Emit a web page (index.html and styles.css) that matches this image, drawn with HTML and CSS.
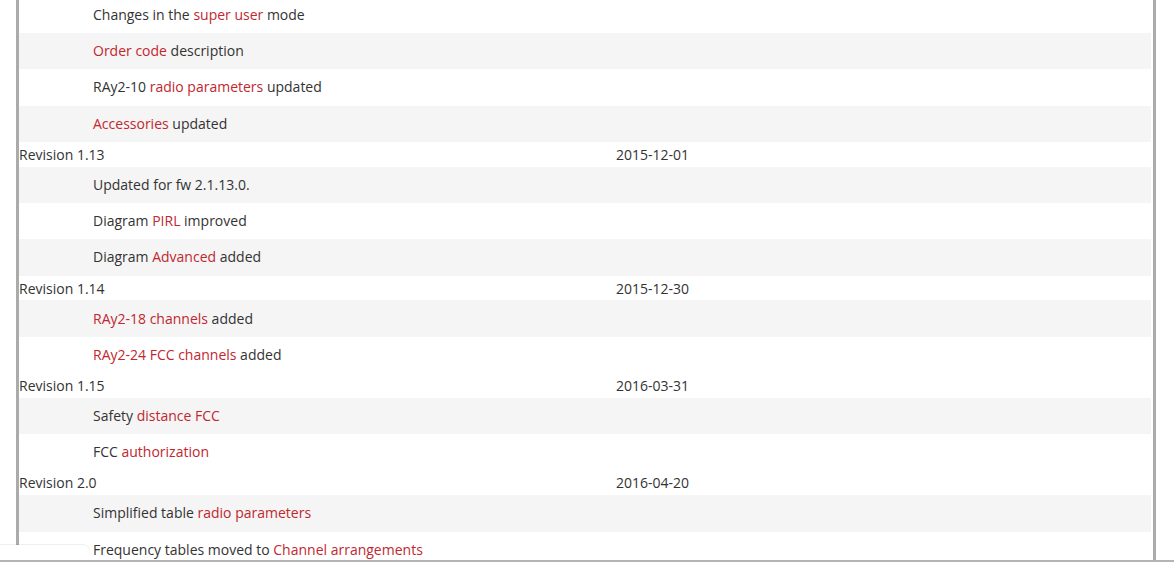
FILE: index.html
```html
<!DOCTYPE html>
<html lang="en">
<head>
<meta charset="utf-8">
<title>Revision history</title>
<link rel="stylesheet" href="styles.css">
</head>
<body>
<div class="frame">
  <div class="history">
    <div class="row item"><span></span><span>Changes in the <a class="ref">super user</a> mode</span><span></span></div>
    <div class="row item alt"><span></span><span><a class="ref">Order code</a> description</span><span></span></div>
    <div class="row item"><span></span><span>RAy2-10 <a class="ref">radio parameters</a> updated</span><span></span></div>
    <div class="row item alt"><span></span><span><a class="ref">Accessories</a> updated</span><span></span></div>

    <div class="row rev"><span class="rev-name">Revision 1.13</span><span class="rev-date">2015-12-01</span></div>
    <div class="row item alt"><span></span><span>Updated for fw 2.1.13.0.</span><span></span></div>
    <div class="row item"><span></span><span>Diagram <a class="ref">PIRL</a> improved</span><span></span></div>
    <div class="row item alt"><span></span><span>Diagram <a class="ref">Advanced</a> added</span><span></span></div>

    <div class="row rev"><span class="rev-name">Revision 1.14</span><span class="rev-date">2015-12-30</span></div>
    <div class="row item alt"><span></span><span><a class="ref">RAy2-18 channels</a> added</span><span></span></div>
    <div class="row item"><span></span><span><a class="ref">RAy2-24 FCC channels</a> added</span><span></span></div>

    <div class="row rev"><span class="rev-name">Revision 1.15</span><span class="rev-date">2016-03-31</span></div>
    <div class="row item alt"><span></span><span>Safety <a class="ref">distance FCC</a></span><span></span></div>
    <div class="row item"><span></span><span>FCC <a class="ref">authorization</a></span><span></span></div>

    <div class="row rev"><span class="rev-name">Revision 2.0</span><span class="rev-date">2016-04-20</span></div>
    <div class="row item alt"><span></span><span>Simplified table <a class="ref">radio parameters</a></span><span></span></div>
    <div class="row item"><span></span><span>Frequency tables moved to <a class="ref">Channel arrangements</a></span><span></span></div>
  </div>
</div>
<div class="bottom-bar"><div class="bottom-tab"></div></div>
</body>
</html>
```

FILE: styles.css
```css
html, body {
  margin: 0;
  padding: 0;
  background: #ffffff;
  height: 100%;
  overflow: hidden;
}

body {
  font-family: "Open Sans", "Liberation Sans", sans-serif;
  font-size: 14px;
  color: #333333;
}

.frame {
  margin-left: 16px;
  width: 1132px;
  height: 562px;
  border-left: 3px solid #ababab;
  border-right: 3px solid #ababab;
  padding-right: 2px;
  overflow: hidden;
}

.history {
  margin-top: -3.4px;
}

.row {
  display: grid;
  grid-template-columns: 74px 523px 1fr;
  align-items: center;
  background: #ffffff;
  box-sizing: border-box;
}

.item {
  height: 36.33px;
  padding-bottom: 1px;
}

.item.alt {
  background: #f5f5f5;
}

.rev {
  height: 24.75px;
  grid-template-columns: 597px 1fr;
}

.rev-name {
  padding-left: 0;
}

.ref {
  color: #c1272f;
  text-decoration: none;
  cursor: pointer;
}

.bottom-bar {
  position: fixed;
  left: 0;
  right: 0;
  bottom: 0;
  height: 2px;
  background: #b4b4b4;
}

.bottom-tab {
  position: absolute;
  left: 0;
  bottom: 2px;
  width: 90px;
  height: 15px;
  background: #ffffff;
  border-top-right-radius: 8px;
  box-shadow: 0 -1px 1px rgba(0, 0, 0, 0.07);
}
```
